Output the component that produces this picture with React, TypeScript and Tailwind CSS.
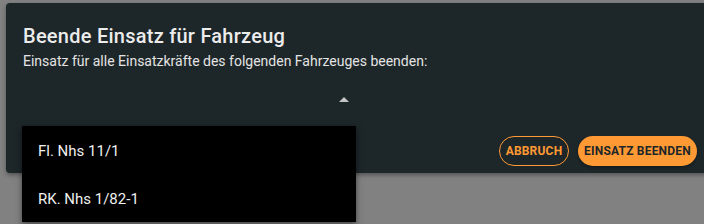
import React from 'react';

const items = ['Fl. Nhs 11/1', 'RK. Nhs 1/82-1'];

const App: React.FC = () => {
  return (
    <div className="relative w-[704px] h-[224px] overflow-hidden bg-[#808180] pt-[3px] pl-[6px] font-['Roboto',sans-serif]">
      {/* Dialog */}
      <div className="w-[720px] h-[170px] rounded-[4px] bg-[#1d2629] shadow-[0_2px_4px_rgba(0,0,0,0.35)] pl-[17px] pt-[19px]">
        <h2 className="text-[20px] leading-[28px] font-medium tracking-[0.25px] text-[#ececec]">Beende Einsatz für Fahrzeug</h2>
        <p className="mt-[1px] text-[14px] leading-[20px] text-[#e4e4e4]">
          Einsatz für alle Einsatzkräfte des folgenden Fahrzeuges beenden:
        </p>

        {/* select arrow */}
        <div className="mt-[26px] ml-[316px] w-0 h-0 border-l-[5px] border-r-[5px] border-b-[5px] border-l-transparent border-r-transparent border-b-[#c4c6c6]" />

        <div className="mt-[34px] flex justify-end gap-[9px] pr-[29px]">
          <button className="h-[30px] w-[70px] rounded-full border border-[#ff9933] text-[12px] font-bold uppercase tracking-[0.2px] text-[#ff9933]">
            Abbruch
          </button>
          <button className="h-[30px] w-[119px] rounded-full bg-[#ff9933] text-[12px] font-bold uppercase tracking-[0.2px] text-[#1d2629] shadow-[0_2px_3px_rgba(0,0,0,0.3)]">
            Einsatz beenden
          </button>
        </div>
      </div>

      {/* Dropdown menu */}
      <div className="absolute left-[22px] top-[126px] w-[334px] bg-black shadow-[0_2px_6px_rgba(0,0,0,0.5)]">
        {items.map((it) => (
          <div key={it} className="h-[48px] flex items-center px-[16px] pt-[2px] text-[15px] text-[#efefef]">
            {it}
          </div>
        ))}
      </div>
    </div>
  );
};

export default App;
